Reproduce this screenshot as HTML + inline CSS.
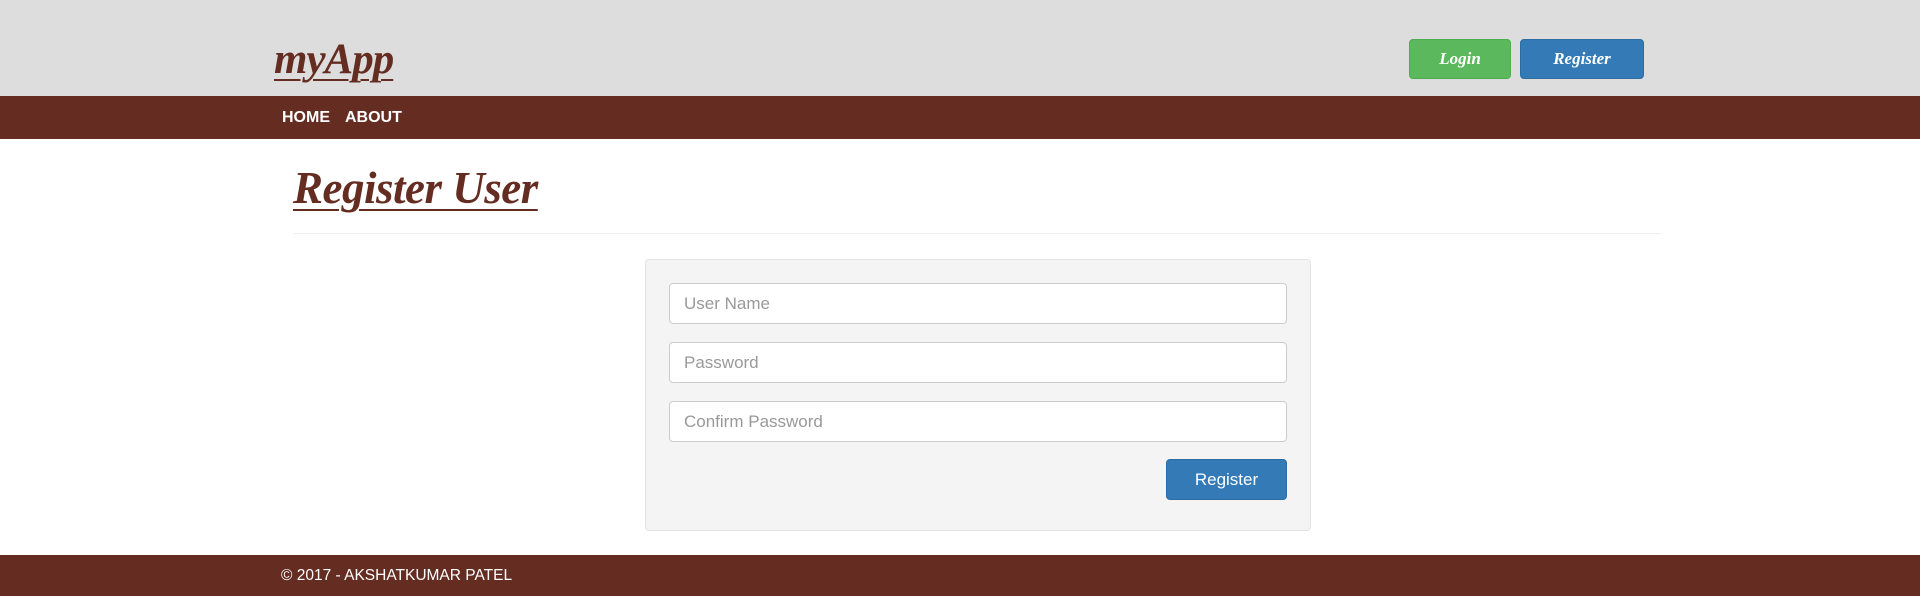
<!DOCTYPE html>
<html><head><meta charset="utf-8"><style>
*{box-sizing:border-box;margin:0;padding:0}
body{width:1920px;height:609px;background:#fff;font-family:"Liberation Sans",Arial,sans-serif;position:relative;overflow:hidden}
.abs{position:absolute}
.hdr{left:0;top:0;width:1920px;height:96px;background:#dddddd}
.nav{left:0;top:96px;width:1920px;height:43px;background:#652d22}
.script{font-family:"Liberation Serif",serif;font-style:italic;font-weight:bold;color:#652d22;text-decoration:underline;text-decoration-thickness:2px;text-underline-offset:6px}
.logo{left:274px;top:35px;font-size:43px;letter-spacing:-1px}
.navl{top:96px;height:43px;line-height:43px;color:#fff;font-weight:bold;font-size:16px}
.btn{border-radius:4px;color:#fff;text-align:center;font-family:"Liberation Serif",serif;font-style:italic;font-weight:bold;font-size:17px;line-height:38px}
.title{left:293px;top:162px;font-size:45px;letter-spacing:-0.5px}
.hr{left:293px;top:233px;width:1369px;height:1px;background:#eeeeee}
.panel{left:645px;top:259px;width:666px;height:272px;background:#f4f4f4;border:1px solid #e3e3e3;border-radius:4px}
.inp{left:669px;width:618px;height:41px;background:#fff;border:1px solid #cccccc;border-radius:4px;color:#999;font-size:17px;line-height:39px;padding-left:14px}
.sub{left:1166px;top:459px;width:121px;height:41px;background:#337ab7;border:1px solid #2e6da4;border-radius:4px;color:#fff;font-size:17px;line-height:39px;text-align:center}
.foot{left:0;top:555px;width:1920px;height:41px;background:#652d22;color:#fff;font-size:15.5px;line-height:41px;padding-left:281px}
</style></head><body>
<div class="abs hdr"></div>
<div class="abs script logo">myApp</div>
<div class="abs btn" style="left:1409px;top:39px;width:102px;height:40px;background:#5cb85c;border:1px solid #4cae4c">Login</div>
<div class="abs btn" style="left:1520px;top:39px;width:124px;height:40px;background:#337ab7;border:1px solid #2e6da4">Register</div>
<div class="abs nav"></div>
<div class="abs navl" style="left:282px">HOME</div>
<div class="abs navl" style="left:345px">ABOUT</div>
<div class="abs script title">Register User</div>
<div class="abs hr"></div>
<div class="abs panel"></div>
<div class="abs inp" style="top:283px">User Name</div>
<div class="abs inp" style="top:342px">Password</div>
<div class="abs inp" style="top:401px">Confirm Password</div>
<div class="abs sub">Register</div>
<div class="abs foot">© 2017 - AKSHATKUMAR PATEL</div>
</body></html>
